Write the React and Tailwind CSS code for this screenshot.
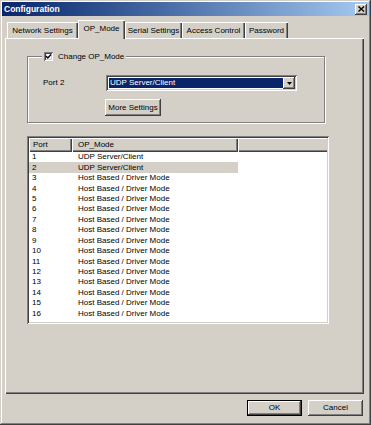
import React from "react";

const raised =
  "shadow-[inset_-1px_-1px_#404040,inset_1px_1px_#ffffff,inset_-2px_-2px_#808080,inset_2px_2px_#d4d0c8]";
const sunken =
  "shadow-[inset_1px_1px_#808080,inset_-1px_-1px_#ffffff,inset_2px_2px_#404040,inset_-2px_-2px_#d4d0c8]";

function Tab({ label, w, selected }) {
  if (selected) {
    return (
      <div
        className="h-[19px] -mb-[1px] relative z-10 bg-[#d4d0c8] flex items-start justify-center pt-[4px] shadow-[inset_1px_1px_#ffffff,inset_-1px_0_#404040,inset_-2px_0_#808080]"
        style={{ width: w }}
      >
        <span className="leading-[9px]">{label}</span>
      </div>
    );
  }
  return (
    <div
      className="h-[16px] bg-[#d4d0c8] flex items-center justify-center shadow-[inset_1px_1px_#ffffff,inset_-1px_0_#404040,inset_-2px_0_#808080]"
      style={{ width: w }}
    >
      <span className="leading-[9px]">{label}</span>
    </div>
  );
}

export default function App() {
  const rows = Array.from({ length: 16 }, (_, i) => ({
    port: i + 1,
    mode: i < 2 ? "UDP Server/Client" : "Host Based / Driver Mode",
  }));

  return (
    <div className="w-[371px] h-[425px] bg-[#d4d0c8] p-[2px] flex flex-col font-['Liberation_Sans',Arial,sans-serif] text-[8px] text-black shadow-[inset_-1px_-1px_#404040,inset_1px_1px_#d4d0c8,inset_-2px_-2px_#808080,inset_2px_2px_#ffffff]">
      {/* Title bar */}
      <div className="h-[14px] flex items-center justify-between bg-linear-to-r from-[#0a246a] to-[#a6caf0] pl-[2px] pr-[2px]">
        <span className="text-white font-bold text-[8.5px] leading-none">Configuration</span>
        <div className={`w-[12px] h-[11px] bg-[#d4d0c8] flex items-center justify-center ${raised}`}>
          <svg width="7" height="6" viewBox="0 0 7 6">
            <path d="M0.5 0.5 L6 5.5 M6 0.5 L0.5 5.5" stroke="#000" strokeWidth="1.4" />
          </svg>
        </div>
      </div>

      {/* Tabs */}
      <div className="mt-[4px] h-[18px] flex items-end pl-[5px]">
        <Tab label="Network Settings" w={71} />
        <Tab label="OP_Mode" w={47} selected />
        <Tab label="Serial Settings" w={57} />
        <Tab label="Access Control" w={63} />
        <Tab label="Password" w={43} />
      </div>

      {/* Panel */}
      <div className="ml-[3px] w-[359px] h-[356px] bg-[#d4d0c8] pl-[22px] pt-[18px] flex flex-col shadow-[inset_1px_1px_#ffffff,inset_-1px_-1px_#404040,inset_-2px_-2px_#808080]">
        {/* Group box */}
        <div className="w-[298px] h-[67px] relative border border-[#808080] shadow-[1px_1px_#ffffff,inset_1px_1px_#ffffff] pt-[18px] pl-[15px]">
          <div className="absolute left-[14px] top-[-5px] px-[2px] bg-[#d4d0c8] flex items-center gap-[5px]">
            <div className={`w-[9px] h-[9px] bg-white flex items-center justify-center ${sunken}`}>
              <svg width="7" height="7" viewBox="0 0 7 7">
                <path d="M1 3 L2.8 5 L6 1.5" stroke="#000" strokeWidth="1.4" fill="none" />
              </svg>
            </div>
            <span className="leading-[9px]">Change OP_Mode</span>
          </div>

          <div className="flex items-start">
            <span className="w-[63px] mt-[3px] leading-[9px]">Port 2</span>
            <div className={`w-[191px] h-[16px] bg-white p-[2px] flex ${sunken}`}>
              <div className="flex-1 mt-[1px] ml-[1px] h-[10px] bg-[#0a246a] text-white pl-[1px] flex items-center leading-none">
                UDP Server/Client
              </div>
              <div className={`w-[12px] h-[12px] bg-[#d4d0c8] flex items-center justify-center ${raised}`}>
                <svg width="5" height="3" viewBox="0 0 5 3">
                  <path d="M0 0 H5 L2.5 3 Z" fill="#000" />
                </svg>
              </div>
            </div>
          </div>

          <div
            className={`ml-[62px] mt-[8px] w-[56px] h-[17px] bg-[#d4d0c8] flex items-center justify-center leading-none ${raised}`}
          >
            More Settings
          </div>
        </div>

        {/* List view */}
        <div className={`mt-[13px] w-[302px] h-[188px] bg-white p-[2px] flex flex-col ${sunken}`}>
          <div className="h-[14px] flex">
            <div className="w-[43px] h-full bg-[#d4d0c8] pl-[4px] flex items-center leading-none shadow-[inset_1px_1px_#ffffff,inset_-1px_-1px_#404040,inset_-2px_-2px_#808080]">
              Port
            </div>
            <div className="w-[166px] h-full bg-[#d4d0c8] pl-[6px] flex items-center leading-none shadow-[inset_1px_1px_#ffffff,inset_-1px_-1px_#404040,inset_-2px_-2px_#808080]">
              OP_Mode
            </div>
            <div className="flex-1 h-full bg-[#d4d0c8] shadow-[inset_1px_1px_#ffffff,inset_0_-1px_#404040,inset_0_-2px_#808080]" />
          </div>
          <div className="flex flex-col">
            {rows.map((r) => (
              <div
                key={r.port}
                className={`h-[10.45px] w-[209px] flex items-center leading-none ${
                  r.port === 2 ? "bg-[#d4d0c8]" : ""
                }`}
              >
                <span className="w-[43px] pl-[3px]">{r.port}</span>
                <span className="pl-[6px]">{r.mode}</span>
              </div>
            ))}
          </div>
        </div>
      </div>

      {/* Buttons */}
      <div className="mt-[6px] flex justify-end gap-[6px] pr-[6px]">
        <div className="w-[55px] h-[16px] border border-black bg-[#d4d0c8] flex items-center justify-center leading-none shadow-[inset_-1px_-1px_#404040,inset_1px_1px_#ffffff,inset_-2px_-2px_#808080]">
          OK
        </div>
        <div className={`w-[55px] h-[16px] bg-[#d4d0c8] flex items-center justify-center leading-none ${raised}`}>
          Cancel
        </div>
      </div>
    </div>
  );
}
